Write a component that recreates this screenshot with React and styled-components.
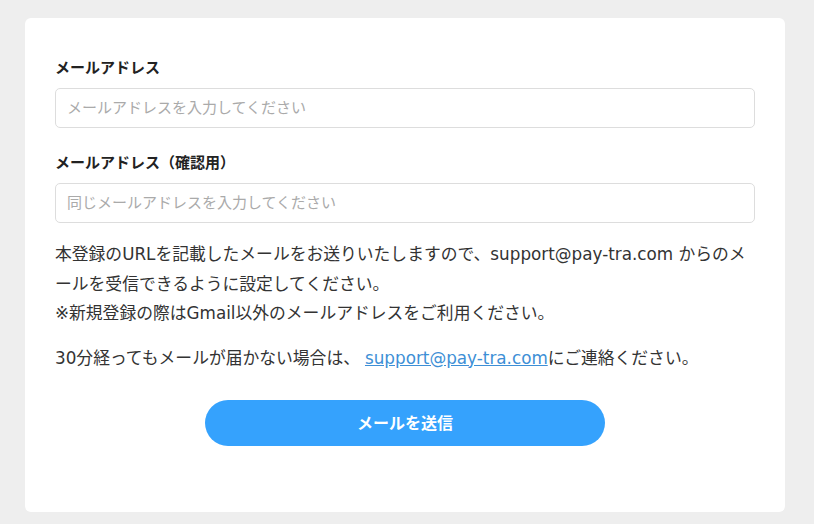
import React from 'react';
import styled, { createGlobalStyle } from 'styled-components';

const GlobalStyle = createGlobalStyle`
    html, body {
        margin: 0;
        padding: 0;
        background: #eeeeee;
    }
    body {
        font-family: "DejaVu Sans", "Noto Sans CJK JP", sans-serif;
        color: #333333;
    }
`;

const Page = styled.div`
    padding: 18px 29px 12px 25px;
`;

const Card = styled.form`
    background: #ffffff;
    border-radius: 6px;
    padding: 40px 30px 66px;
`;

const FieldGroup = styled.div`
    margin-bottom: ${props => props.last ? '17px' : '25px'};
`;

const Label = styled.label`
    display: block;
    font-family: "Noto Sans CJK JP", sans-serif;
    font-size: 15px;
    font-weight: 700;
    line-height: 18px;
    color: #222222;
    margin-bottom: 12px;
`;

const Input = styled.input`
    box-sizing: border-box;
    display: block;
    width: 100%;
    height: 40px;
    padding: 0 11px 4px;
    border: 1px solid #dddddd;
    border-radius: 5px;
    font-family: "Noto Sans CJK JP", sans-serif;
    font-size: 15px;
    color: #333333;
    outline: none;

    &::placeholder {
        color: #aaaaaa;
    }
`;

const Text = styled.p`
    margin: 0 0 ${props => props.gap || 0}px;
    font-size: 16.8px;
    line-height: 29.5px;
    color: #333333;
`;

const Link = styled.a`
    color: #3d8fd6;
    text-decoration: underline;
    margin-left: 5px;
`;

const ButtonRow = styled.div`
    display: flex;
    justify-content: center;
    margin-top: 27px;
`;

const SubmitButton = styled.button`
    width: 400px;
    height: 46px;
    padding: 0 0 2px;
    border: none;
    border-radius: 23px;
    background: #35a2fd;
    color: #ffffff;
    font-family: "Noto Sans CJK JP", sans-serif;
    font-size: 16px;
    font-weight: 700;
    cursor: pointer;
`;

export default function App() {
    return (
        <Page>
            <GlobalStyle />
            <Card onSubmit={e => e.preventDefault()}>
                <FieldGroup>
                    <Label htmlFor="email">メールアドレス</Label>
                    <Input id="email" type="email" placeholder="メールアドレスを入力してください" />
                </FieldGroup>
                <FieldGroup last>
                    <Label htmlFor="email-confirm">メールアドレス（確認用）</Label>
                    <Input id="email-confirm" type="email" placeholder="同じメールアドレスを入力してください" />
                </FieldGroup>
                <Text gap={15}>
                    本登録のURLを記載したメールをお送りいたしますので、support@pay-tra.com からのメールを受信できるように設定してください。
                    <br />
                    ※新規登録の際はGmail以外のメールアドレスをご利用ください。
                </Text>
                <Text>
                    30分経ってもメールが届かない場合は、<Link href="#">support@pay-tra.com</Link>にご連絡ください。
                </Text>
                <ButtonRow>
                    <SubmitButton type="submit">メールを送信</SubmitButton>
                </ButtonRow>
            </Card>
        </Page>
    );
}
